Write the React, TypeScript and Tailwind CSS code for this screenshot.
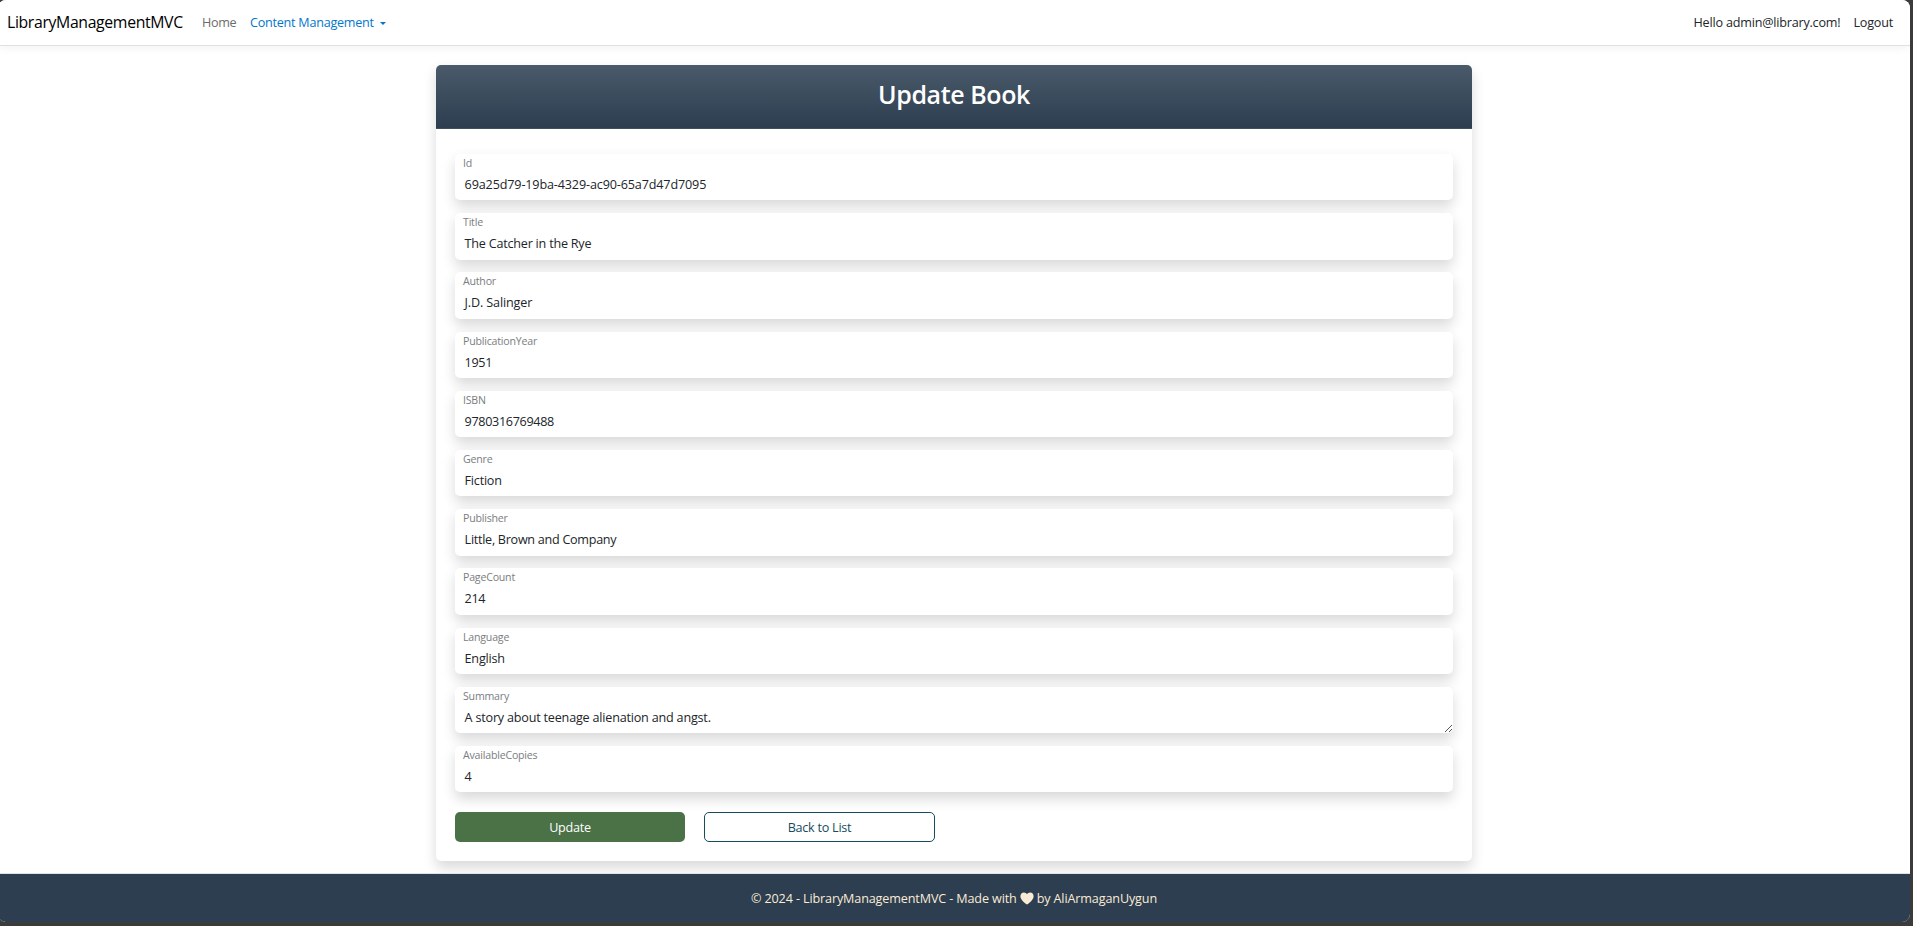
import React from "react";

const fields = [
  { label: "Id", value: "69a25d79-19ba-4329-ac90-65a7d47d7095", tracking: "tracking-[-0.14px]" },
  { label: "Title", value: "The Catcher in the Rye" },
  { label: "Author", value: "J.D. Salinger", tracking: "tracking-[-0.14px]" },
  { label: "PublicationYear", value: "1951", tracking: "tracking-[-0.33px]" },
  { label: "ISBN", value: "9780316769488", tracking: "tracking-[-0.33px]" },
  { label: "Genre", value: "Fiction" },
  { label: "Publisher", value: "Little, Brown and Company", tracking: "tracking-[-0.28px]" },
  { label: "PageCount", value: "214", tracking: "tracking-[-0.33px]" },
  { label: "Language", value: "English" },
  { label: "Summary", value: "A story about teenage alienation and angst.", tracking: "tracking-[-0.2px]", multiline: true },
  { label: "AvailableCopies", value: "4" },
];

type FieldProps = { label: string; value: string; tracking?: string; multiline?: boolean };

function Field({ label, value, tracking = "tracking-[-0.22px]", multiline }: FieldProps) {
  return (
    <div className="relative mb-[12.8px] flex h-[46.4px] flex-col rounded-[5px] bg-white shadow-[0_6.4px_12.8px_rgba(0,0,0,0.15)]">
      <label className="h-[22px] pl-2 pt-px text-[10.6px] leading-[16px] tracking-[-0.2px] text-[#7a7d80]">{label}</label>
      <div className={`pl-[9.6px] text-[12.6px] leading-[18px] text-[#212529] ${tracking}`}>{value}</div>
      {multiline && (
        <svg className="absolute bottom-[1px] right-[1px]" width="7" height="7" viewBox="0 0 7 7" fill="#555" shapeRendering="crispEdges">
          <path d="M6 0h1v1h-1zM5 1h1v1h-1zM4 2h1v1h-1zM3 3h1v1h-1zM2 4h1v1h-1zM1 5h1v1h-1zM0 6h1v1h-1zM6 4h1v1h-1zM5 5h1v1h-1zM4 6h1v1h-1z" />
        </svg>
      )}
    </div>
  );
}

export default function App() {
  return (
    <div className="h-[926px] w-[1913px] overflow-hidden bg-[#3b3b3b] pb-[4px] pr-[3px] font-['Open_Sans','Noto_Sans',sans-serif]">
      <div className="-ml-[2px] flex h-[922px] w-[1912px] flex-col overflow-hidden rounded-[8px] bg-white">
        <nav className="flex h-[46px] shrink-0 items-center border-b border-[#dee2e6] bg-white pl-[9px] pr-[17px] pt-[2px] text-[12.6px] tracking-[-0.3px] text-[#212529] shadow-[0_1.6px_9.6px_rgba(0,0,0,0.06)]">
          <span className="w-[195px] pb-[2px] text-[15.8px] tracking-[-0.35px] text-black">LibraryManagementMVC</span>
          <span className="w-[48px] text-[#6b6b6b]">Home</span>
          <span className="tracking-[-0.24px] text-[#0077cc]">Content Management</span>
          <span className="ml-[6px] h-0 w-0 border-x-[3.5px] border-t-[3.5px] border-x-transparent border-t-[#0077cc]" />
          <span className="ml-auto tracking-[-0.2px]">Hello admin@library.com!</span>
          <span className="ml-[13px] tracking-[-0.2px]">Logout</span>
        </nav>

        <main className="h-[827px] shrink-0 pt-[19px]">
          <div className="mx-auto flex h-[796px] w-[1036px] flex-col rounded-[5px] bg-white shadow-[0_6.4px_12.8px_rgba(0,0,0,0.15)]">
            <header className="flex h-[64px] shrink-0 items-center justify-center rounded-t-[5px] border-b border-[#3f4f5f] bg-linear-to-b from-[#4a5a6a] to-[#2c3e50] pb-[3px]">
              <h1 className="text-[25px] font-semibold tracking-[-0.4px] text-white">Update Book</h1>
            </header>
            <div className="px-[19px] pt-[25px]">
              {fields.map((f) => (
                <Field key={f.label} {...f} />
              ))}
              <div className="flex gap-[19px] pt-[7px] text-[12.6px] tracking-[-0.25px]">
                <button className="h-[30px] w-[230px] rounded-[5px] bg-[#4a7246] pt-[2px] text-white">Update</button>
                <button className="h-[30px] w-[231px] rounded-[5px] border border-[#164b60] pt-[2px] text-[#164b60]">Back to List</button>
              </div>
            </div>
          </div>
        </main>

        <footer className="flex h-[49px] shrink-0 items-center justify-center border-t border-[#dee2e6] bg-[#2c3e50] pt-[2px] text-[12.6px] tracking-[-0.13px] text-[#faebd7]">
          <span>© 2024 - LibraryManagementMVC - Made with</span>
          <svg className="mx-[3px] mb-px" width="14" height="13" viewBox="0 0 14 13" fill="#faebd7">
            <path d="M7 12.6C3.6 9.9.4 7.4.4 4.2.4 2 1.9.4 3.9.4 5.2.4 6.4 1.1 7 2.2 7.6 1.1 8.8.4 10.1.4 12.1.4 13.6 2 13.6 4.2 13.6 7.4 10.4 9.9 7 12.6z" />
          </svg>
          <span>by AliArmaganUygun</span>
        </footer>
      </div>
    </div>
  );
}
